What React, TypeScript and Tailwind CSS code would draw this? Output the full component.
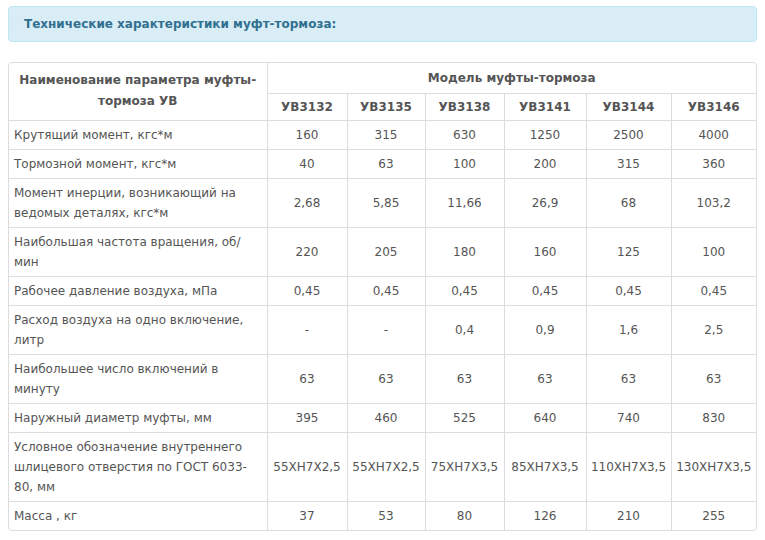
const models = ["УВ3132", "УВ3135", "УВ3138", "УВ3141", "УВ3144", "УВ3146"];

const rows: { name: string; values: string[] }[] = [
  { name: "Крутящий момент, кгс*м", values: ["160", "315", "630", "1250", "2500", "4000"] },
  { name: "Тормозной момент, кгс*м", values: ["40", "63", "100", "200", "315", "360"] },
  { name: "Момент инерции, возникающий на ведомых деталях, кгс*м", values: ["2,68", "5,85", "11,66", "26,9", "68", "103,2"] },
  { name: "Наибольшая частота вращения, об/мин", values: ["220", "205", "180", "160", "125", "100"] },
  { name: "Рабочее давление воздуха, мПа", values: ["0,45", "0,45", "0,45", "0,45", "0,45", "0,45"] },
  { name: "Расход воздуха на одно включение, литр", values: ["-", "-", "0,4", "0,9", "1,6", "2,5"] },
  { name: "Наибольшее число включений в минуту", values: ["63", "63", "63", "63", "63", "63"] },
  { name: "Наружный диаметр муфты, мм", values: ["395", "460", "525", "640", "740", "830"] },
  {
    name: "Условное обозначение внутреннего шлицевого отверстия по ГОСТ 6033-80, мм",
    values: ["55ХН7Х2,5", "55ХН7Х2,5", "75ХН7Х3,5", "85ХН7Х3,5", "110ХН7Х3,5", "130ХН7Х3,5"],
  },
  { name: "Масса , кг", values: ["37", "53", "80", "126", "210", "255"] },
];

export default function App() {
  return (
    <div className="min-h-screen bg-white px-2 pt-[6px] text-[12px] leading-5 text-[#555] font-['DejaVu_Sans',Verdana,sans-serif]">
      <div className="flex h-9 items-center rounded border border-[#bce8f1] bg-[#d9edf7] pl-[15px] font-bold text-[#31708f]">
        Технические характеристики муфт-тормоза:
      </div>

      <div className="mt-5 overflow-hidden rounded border border-[#ddd]">
        <table className="w-full table-fixed border-collapse">
          <colgroup>
            <col className="w-[258px]" />
            <col className="w-[80px]" />
            <col className="w-[78px]" />
            <col className="w-[79px]" />
            <col className="w-[82px]" />
            <col className="w-[85px]" />
            <col />
          </colgroup>
          <thead>
            <tr>
              <th rowSpan={2} className="border-r border-b border-[#ddd] px-[5px] py-0 text-center font-bold leading-[21px]">
                Наименование параметра муфты-тормоза УВ
              </th>
              <th colSpan={6} className="h-[30px] border-b border-[#ddd] px-[5px] py-1 text-center font-bold">
                Модель муфты-тормоза
              </th>
            </tr>
            <tr>
              {models.map((m, i) => (
                <th
                  key={m}
                  className={`h-[27px] border-b border-[#ddd] px-0 py-[3px] text-center font-bold ${i < models.length - 1 ? "border-r" : ""}`}
                >
                  {m}
                </th>
              ))}
            </tr>
          </thead>
          <tbody>
            {rows.map((r, ri) => (
              <tr key={r.name}>
                <td className={`border-r border-[#ddd] px-[5px] py-1 align-middle ${ri < rows.length - 1 ? "border-b" : ""}`}>
                  {r.name}
                </td>
                {r.values.map((v, i) => (
                  <td
                    key={i}
                    className={`border-[#ddd] px-0 py-1 text-center align-middle whitespace-nowrap ${i < r.values.length - 1 ? "border-r" : ""} ${ri < rows.length - 1 ? "border-b" : ""}`}
                  >
                    {v}
                  </td>
                ))}
              </tr>
            ))}
          </tbody>
        </table>
      </div>
    </div>
  );
}
